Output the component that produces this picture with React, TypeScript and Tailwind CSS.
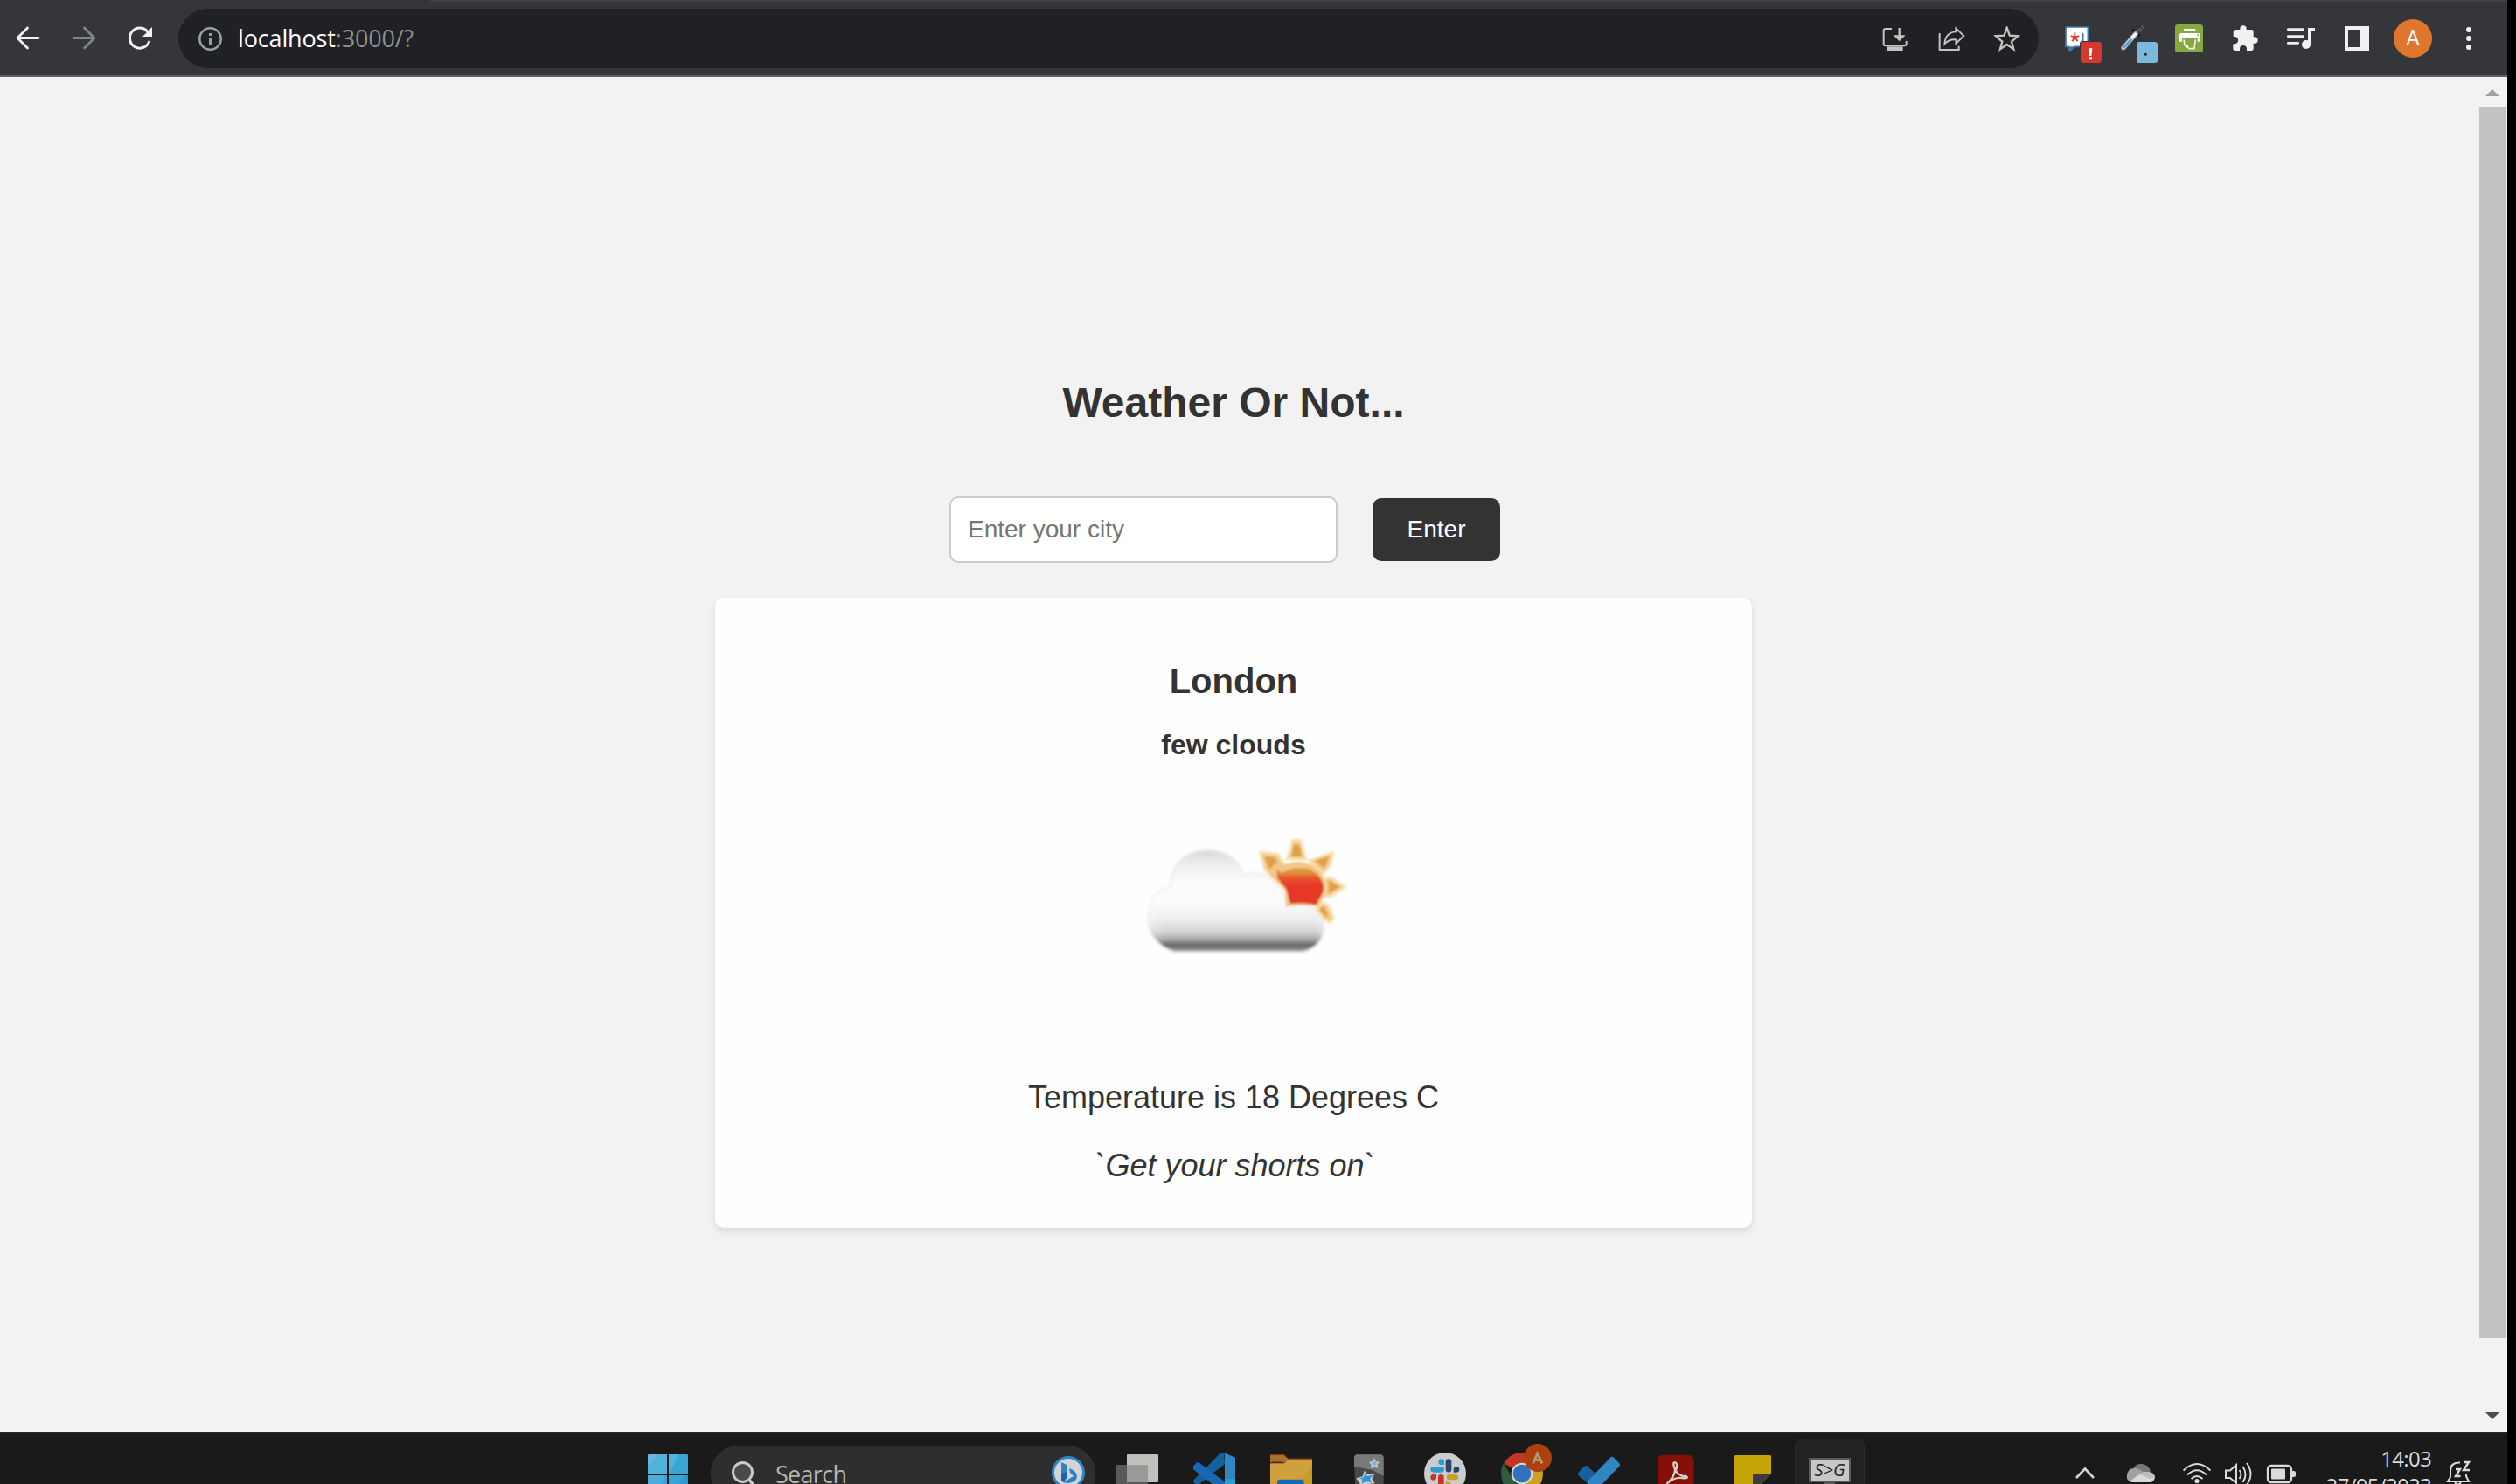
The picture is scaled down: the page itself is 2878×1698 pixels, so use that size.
import React from "react";

function Toolbar() {
  return (
    <header className="flex h-[88px] w-full shrink-0 flex-col border-b-2 border-[#5f6065] bg-[#35363a]">
      <div className="ml-[492px] h-[2px] shrink-0 bg-[#404145]" />
      <div className="flex h-[84px] items-start pt-[8px]">
        <svg className="mt-[18px] ml-[18px] h-8 w-[160px] shrink-0" viewBox="18 28 160 32" fill="none">
          <path d="M44 43.5H20.5M31.5 32L20 43.5L31.5 55" stroke="#f1f1f1" strokeWidth="2.8" strokeLinecap="round" strokeLinejoin="round" />
          <path d="M84 43.5H107.500M96.500 32L108 43.500L96.500 55" stroke="#7e8487" strokeWidth="2.800" strokeLinecap="round" strokeLinejoin="round" />
          <path d="M170.500 48A11.500 11.500 0 1 1 168.500 36" stroke="#f1f1f1" strokeWidth="3" strokeLinecap="round" />
          <path d="M174 31V42H163Z" fill="#f1f1f1" />
        </svg>
        <div className="ml-[26px] flex h-[68px] w-[2128px] shrink-0 items-start rounded-full bg-[#202124]">
          <svg className="mt-5 ml-[22px] h-7 w-7" viewBox="0 0 28 28" fill="none">
            <circle cx="14.500" cy="14.500" r="12.200" stroke="#9aa0a6" strokeWidth="2.600" />
            <path d="M14.500 8V11M14.500 13.200V21" stroke="#9aa0a6" strokeWidth="3" />
          </svg>
          <div className="mt-[15px] ml-[18px] h-10 font-['Open_Sans','Noto_Sans',sans-serif] text-[27px] leading-[38px] tracking-[-0.15px] whitespace-pre text-white">
            localhost<span className="text-[#8f8f8f]">:3000/?</span>
          </div>
          <svg className="mt-5 mr-[21px] ml-auto h-[30px] w-[158px]" viewBox="160 90 474 90" fill="none">
            <path d="M193 99H172Q165 99 165 106V150Q165 157 172 157H236Q243 157 243 150V141" stroke="#c4c4c4" strokeWidth="6" />
            <path d="M178 160H231V174H178Z" fill="#c4c4c4" />
            <path d="M219 96V132" stroke="#c4c4c4" strokeWidth="7" />
            <path d="M198 121H240L219 142Z" fill="#c4c4c4" />
            <path d="M357 114V171H423V158" stroke="#c4c4c4" strokeWidth="6" />
            <path d="M374 151Q377 111 413 109V97L440 123L413 150V136Q390 134 374 151Z" stroke="#c4c4c4" strokeWidth="5.500" />
            <path d="M588 96L597.500 122L626 124L604 143L611 169L588 153L565 169L572 143L550 124L578.500 122Z" stroke="#c4c4c4" strokeWidth="7" />
          </svg>
        </div>
        <svg className="mt-[18px] ml-[28px] h-12 w-[46px] shrink-0" viewBox="780 84 138 144">
          <path d="M791 93H865V160H818L804 173L798 160H789V96Z" fill="#fff" stroke="#3f76a5" strokeWidth="5" />
          <path d="M796 160H814V168L808 174H798Z" fill="#3f76a5" />
          <path d="M848 114V150" stroke="#3f76a5" strokeWidth="5" />
          <path d="M820 112V128M806 123L820 128L835 123M820 128L811 142M820 128L830 142" stroke="#d63b26" strokeWidth="5.500" fill="none" />
          <rect x="837" y="141" width="78" height="78" rx="9" fill="#35363a" />
          <rect x="840" y="144" width="72" height="72" rx="9" fill="#d5382f" />
          <path d="M867 166H880L877 192H870ZM868 196H879V205H868Z" fill="#fff" />
        </svg>
        <svg className="mt-[18px] ml-[18px] h-12 w-[48px] shrink-0" viewBox="972 84 144 144">
          <path d="M1026 119L1056 91" stroke="#555659" strokeWidth="12" strokeDasharray="14 3" />
          <path d="M1020 104L1040 122" stroke="#1f2022" strokeWidth="11" strokeLinecap="round" />
          <path d="M987 164L1029 116" stroke="#b9b9b9" strokeWidth="16" strokeLinecap="round" />
          <path d="M988 162L1028 117" stroke="#f6f8f8" strokeWidth="9" strokeLinecap="round" />
          <path d="M988 162L1012 137" stroke="#4ca4d8" strokeWidth="9" strokeLinecap="round" />
          <rect x="1032" y="144" width="72" height="72" rx="9" fill="#7cb9df" />
          <circle cx="1063" cy="187" r="4.500" fill="#202124" />
        </svg>
        <svg className="mt-[18px] ml-[16px] h-8 w-8 shrink-0" viewBox="24 84 96 96">
          <rect x="24" y="84" width="96" height="96" rx="10" fill="#85a83f" />
          <path d="M54 99H94V108H54ZM45 114H104Q110 114 110 120V143H101V130H48V143H39V120Q39 114 45 114Z" fill="#fff" />
          <path d="M54 136L57 155L73 167H90L94 136" fill="#85a83f" stroke="#efefef" strokeWidth="5" />
          <path d="M56 153H69V166Z" fill="#fff" />
          <circle cx="102" cy="121" r="3" fill="#85a83f" />
        </svg>
        <svg className="mt-[18px] ml-[33px] h-8 w-8 shrink-0" viewBox="219 84 96 96" fill="#f1f1f1">
          <path d="M231 102H247V99A11 11 0 0 1 269 99V102H286Q293 102 293 109V127H297A11 11 0 0 1 297 149H293V167Q293 174 286 174H270V168A12 12 0 0 0 246 168V174H230Q223 174 223 167V151H228A12 12 0 0 0 228 126H224V109Q224 102 231 102Z" />
        </svg>
        <svg className="mt-[18px] ml-[31px] h-8 w-8 shrink-0" viewBox="408 84 96 96" fill="none">
          <path d="M412 101H464M412 125H464M412 148H446" stroke="#f1f1f1" strokeWidth="8.500" strokeLinecap="round" />
          <circle cx="474" cy="153" r="15" fill="#f1f1f1" />
          <path d="M480 153V96H504V105H489V153Z" fill="#f1f1f1" />
        </svg>
        <div className="mt-[20px] ml-[34px] h-7 w-7 shrink-0 border-y-4 border-r-[10px] border-l-4 border-[#f1f1f1]" />
        <div className="mt-[12px] ml-[28px] flex h-11 w-11 shrink-0 items-center justify-center rounded-full bg-[#e0752d] font-['Roboto',sans-serif] text-[23px] text-white">
          A
        </div>
        <div className="mt-[21px] ml-[39px] flex shrink-0 flex-col gap-1">
          <i className="h-1.5 w-1.5 rounded-full bg-[#f1f1f1]" />
          <i className="h-1.5 w-1.5 rounded-full bg-[#f1f1f1]" />
          <i className="h-1.5 w-1.5 rounded-full bg-[#f1f1f1]" />
        </div>
      </div>
    </header>
  );
}

function WeatherIcon() {
  return (
    <svg className="h-[200px] w-[262px]" viewBox="0 0 786 600">
      <defs>
        <linearGradient id="cloud" x1="0" y1="155" x2="0" y2="512" gradientUnits="userSpaceOnUse">
          <stop offset="0" stopColor="#d6d6d6" />
          <stop offset="0.100" stopColor="#e8e8e8" />
          <stop offset="0.300" stopColor="#fafafa" />
          <stop offset="0.480" stopColor="#fcfcfc" />
          <stop offset="0.660" stopColor="#f0f0f0" />
          <stop offset="0.800" stopColor="#d2d2d2" />
          <stop offset="0.870" stopColor="#a4a4a3" />
          <stop offset="0.920" stopColor="#666665" />
          <stop offset="0.960" stopColor="#82827f" />
          <stop offset="1" stopColor="#c4c4c2" />
        </linearGradient>
        <linearGradient id="sun" x1="0" y1="200" x2="0" y2="350" gradientUnits="userSpaceOnUse">
          <stop offset="0" stopColor="#f3c183" />
          <stop offset="0.120" stopColor="#efb872" />
          <stop offset="0.160" stopColor="#dc9a3f" />
          <stop offset="0.260" stopColor="#dc9038" />
          <stop offset="0.340" stopColor="#ea5a30" />
          <stop offset="0.520" stopColor="#e63a28" />
          <stop offset="1" stopColor="#e43626" />
        </linearGradient>
        <filter id="soft" x="-10%" y="-10%" width="120%" height="120%">
          <feGaussianBlur stdDeviation="5" />
        </filter>
        <filter id="ray" x="-10%" y="-10%" width="120%" height="120%">
          <feGaussianBlur stdDeviation="2.500" />
        </filter>
        <linearGradient id="edge" x1="0" y1="0" x2="1" y2="0">
          <stop offset="0" stopColor="#fff" stopOpacity="0.350" />
          <stop offset="0.100" stopColor="#fff" stopOpacity="0" />
          <stop offset="0.950" stopColor="#fff" stopOpacity="0" />
          <stop offset="1" stopColor="#fff" stopOpacity="0.300" />
        </linearGradient>
      </defs>
      <g filter="url(#soft)">
        <path
          d="M190 508Q146 494 120 460Q94 425 100 375Q108 300 176 285Q180 165 302 158Q400 160 428 244Q480 225 520 255Q560 280 578 345Q640 330 690 375Q715 420 694 465Q669 500 629 508Z"
          fill="url(#cloud)"
          stroke="#ececec"
          strokeWidth="5"
        />
        <path
          d="M190 508Q146 494 120 460Q94 425 100 375Q108 300 176 285Q180 165 302 158Q400 160 428 244Q480 225 520 255Q560 280 578 345Q640 330 690 375Q715 420 694 465Q669 500 629 508Z"
          fill="url(#edge)"
        />
      </g>
      <g filter="url(#ray)">
        <g fill="#f3c588" stroke="#f8e2b4" strokeWidth="9" strokeLinejoin="round">
          <path d="M594 124H624L632 160L642 190H576L588 160Z" />
          <path d="M484 166L545 172L572 215L540 262L500 225Z" />
          <path d="M735 166L724 212L702 238L652 195Z" />
          <path d="M776 285L725 317H706V256L728 253Z" />
          <path d="M700 338L716 345L736 392L724 406L706 398L676 360Z" />
        </g>
        <path d="M520 235Q570 196 625 199Q708 212 708 290Q706 325 684 352Q630 342 574 352Q570 318 570 296L520 245Z" fill="#f3c588" />
        <path d="M541 226L560 236Q600 214 640 219Q690 235 701 278V300L677 346Q630 336 588 342L574 292L543 254Z" fill="url(#sun)" />
        <g fill="#e0a044">
          <path d="M598 142H620L628 180H592Z" />
          <path d="M499 180L534 182L542 200L516 224Z" />
          <path d="M720 181L704 220L672 192Z" />
          <path d="M758 284L720 306V262Z" />
          <path d="M700 350L715 374L711 391L688 364Z" />
        </g>
      </g>
    </svg>
  );
}

function Page() {
  return (
    <main className="flex min-h-0 flex-1 bg-[#f2f2f2]">
      <div className="flex w-[2822px] flex-col items-center font-['Liberation_Sans',Arial,sans-serif] text-[#333]">
        <h1 className="mt-[345px] h-[55px] text-[48px] leading-[56px] font-bold">Weather Or Not...</h1>
        <form className="mt-20 mr-5 flex h-[76px] items-center gap-10" onSubmit={(e) => e.preventDefault()}>
          <input
            className="h-[76px] w-[444px] rounded-[10px] border-2 border-[#ccc] bg-white px-[19px] text-[28px] placeholder:text-[#757575]"
            placeholder="Enter your city"
          />
          <button className="h-[72px] w-[146px] rounded-[10px] bg-[#333] text-[28px] text-white">Enter</button>
        </form>
        <section className="mt-10 flex h-[721px] w-[1186px] flex-col items-center rounded-[10px] bg-[#fefefe] shadow-[0_4px_8px_rgba(0,0,0,0.1)]">
          <h2 className="mt-[72px] text-[40px] leading-[46px] font-bold">London</h2>
          <h3 className="mt-[32px] text-[32px] leading-[36px] font-bold">few clouds</h3>
          <div className="mt-[50px] flex">
            <WeatherIcon />
          </div>
          <p className="mt-[116px] text-[36px] leading-[40px]">Temperature is 18 Degrees C</p>
          <p className="mt-[38px] ml-[3px] text-[36px] leading-[40px] italic">`Get your shorts on`</p>
        </section>
      </div>
      <div className="ml-[14px] flex w-[30px] flex-col items-center">
        <svg className="mt-[14px] h-2 w-4 shrink-0" viewBox="0 0 16 8">
          <path d="M0 8L8 0L16 8Z" fill="#a0a19c" />
        </svg>
        <div className="mt-3 h-[1409px] w-[30px] shrink-0 bg-[#c1c2c2]" />
        <svg className="mt-[85px] h-2 w-4 shrink-0" viewBox="0 0 16 8">
          <path d="M0 0L8 8L16 0Z" fill="#4b4c50" />
        </svg>
      </div>
    </main>
  );
}

function Taskbar() {
  return (
    <footer className="flex h-[60px] shrink-0 items-start overflow-hidden border-t-2 border-[#2a2a2a] bg-[#1a1a1a] font-['Open_Sans','Noto_Sans',sans-serif]">
      <svg className="mt-6 ml-[741px] h-[34px] w-[46px] shrink-0" viewBox="0 0 46 34">
        <path d="M1 0H22V22H0V1Z" fill="#4fb3da" />
        <path d="M1 0H12L0 13V1Z" fill="#6bb4e0" />
        <path d="M24 0H45L46 1V22H24Z" fill="#38a5d6" />
        <path d="M24 0H35L30 12L24 22Z" fill="#4fb3da" />
        <path d="M0 24H22V34H0Z" fill="#38a5d6" />
        <path d="M0 24H20L14 34H0Z" fill="#49afd9" />
        <path d="M24 24H46V34H24Z" fill="#2b98cb" />
        <path d="M24 24H42L36 34H24Z" fill="#38a5d6" />
      </svg>
      <div className="mt-[14px] ml-[26px] flex h-[64px] w-[440px] shrink-0 items-start rounded-full border border-[#353535] bg-[#2e2e2e]">
        <svg className="mt-4 ml-[23px] h-[30px] w-[30px] shrink-0" viewBox="0 0 30 30" fill="none">
          <circle cx="12.500" cy="13.500" r="11" fill="#494a4e" stroke="#c9c9c9" strokeWidth="3" />
          <path d="M20 22L27 31" stroke="#c9c9c9" strokeWidth="3.500" />
        </svg>
        <span className="mt-[13px] ml-5 text-[27px] leading-[38px] tracking-[-0.7px] text-[#b4b4b0]">Search</span>
        <svg className="mt-[11px] mr-[11px] ml-auto h-[38px] w-[38px] shrink-0" viewBox="0 0 38 38">
          <circle cx="19" cy="19" r="17.500" fill="#d2d4d6" stroke="#2d85cb" strokeWidth="3" />
          <path d="M11 7L17 10V25L13 30Q11 28 11 26Z" fill="#2a86c8" />
          <path d="M20 14Q29 17 29 24Q28 30 18 31L13 30L25 23L21 19Z" fill="#2b7fca" />
          <path d="M11 20L17 18V25L14 30L11 28Z" fill="#2460ad" />
        </svg>
      </div>
      <svg className="mt-6 ml-[24px] h-[34px] w-12 shrink-0" viewBox="0 0 48 34">
        <rect x="12" width="36" height="32" rx="1" fill="#bfc1bc" />
        <path d="M0 13Q0 12 1 12H12V32H36V34H0Z" fill="#58595b" />
        <path d="M12 12H35L36 13V32H12Z" fill="#989a96" />
      </svg>
      <svg className="mt-[22px] ml-10 h-9 w-12 shrink-0" viewBox="375 126 144 108">
        <path d="M375 222L466 130L480 126L483 165L396 234H382L375 227Z" fill="#17609e" />
        <path d="M375 172L387 160H394L483 226V234H440L375 184Z" fill="#1769b3" />
        <path d="M480 126L519 143V234H483V136Z" fill="#2f86c3" />
        <path d="M483 216H519V234H483Z" fill="#2a9dd2" />
      </svg>
      <svg className="mt-[22px] ml-10 h-9 w-12 shrink-0" viewBox="639 126 144 108">
        <path d="M639 134H687L702 148H783V160H639Z" fill="#a9722c" />
        <path d="M639 134H687L699 147H783" stroke="#9a3b16" strokeWidth="3" fill="none" />
        <path d="M639 163H686L703 150H783V234H639Z" fill="#cfa03c" />
        <path d="M783 170V234H732Z" fill="#c59b22" />
        <path d="M647 157H678" stroke="#9a3b16" strokeWidth="3" />
        <path d="M663 234V228Q663 218 673 218H745Q755 218 755 228V234Z" fill="#1767b3" />
      </svg>
      <svg className="mt-[22px] ml-[47px] h-9 w-9 shrink-0" viewBox="924 126 108 108">
        <path d="M927 145Q927 133 939 133H1016Q1028 133 1028 145V234H930Z" fill="#48494b" />
        <path d="M927 145Q927 133 939 133H1016Q1028 133 1028 145V206L990 186L927 174Z" fill="#78797b" />
        <path d="M996 145L1002 157L1014 158L1006 167L1009 180L996 174L984 181L986 168L978 158L990 156Z" fill="#c6ccd0" />
        <circle cx="996" cy="163" r="8" fill="#7fb5d8" />
        <path d="M962 188L972 201L998 197L988 216L998 232L972 234H948L934 214L956 208Z" fill="#c8ccce" />
        <path d="M964 196L972 207L991 203L981 217L988 228L968 226L953 232L956 218L945 214L960 210Z" fill="#3194d2" />
      </svg>
      <svg className="mt-[22px] ml-[45px] h-9 w-12 shrink-0" viewBox="1167 126 144 108">
        <circle cx="1239" cy="198" r="72" fill="#cbcccd" />
        <path d="M1226 148A10 10 0 0 1 1236 158V168H1226A10 10 0 0 1 1226 148ZM1199 174H1226A10 10 0 0 1 1226 194H1199A10 10 0 0 1 1199 174Z" fill="#2c9bd0" />
        <path d="M1251 148A10 10 0 0 1 1261 158V184A10 10 0 0 1 1241 184V158A10 10 0 0 1 1251 148ZM1268 194V184A10 10 0 1 1 1278 194Z" fill="#2b4467" />
        <path d="M1209 201V211A10 10 0 1 1 1199 201ZM1225 201A10 10 0 0 1 1235 211V234H1215V211A10 10 0 0 1 1225 201Z" fill="#c03725" />
        <path d="M1251 201H1278A10 10 0 0 1 1278 220H1251A10 10 0 0 1 1251 201ZM1241 226H1251L1261 234H1241Z" fill="#cfa01f" />
      </svg>
      <svg className="mt-[10px] ml-[39px] h-12 w-[60px] shrink-0" viewBox="108 90 180 144">
        <path d="M183 198L120 163Q142 126 183 126Q230 128 248 166Z" fill="#c03725" />
        <path d="M120 163Q111 178 111 198Q112 220 120 234H165L150 212Z" fill="#2f5c3b" />
        <path d="M183 162H246Q255 178 255 198Q254 220 246 234H195Z" fill="#cfa01f" />
        <circle cx="183" cy="198" r="34" fill="#2d72bb" stroke="#d7d7d7" strokeWidth="6" />
        <circle cx="237" cy="144" r="48" fill="#ad400f" />
        <path d="M221 163L236 129L252 163M227 151H247" stroke="#aaa07a" strokeWidth="8" fill="none" />
      </svg>
      <svg className="mt-[22px] ml-[29px] h-9 w-12 shrink-0" viewBox="375 126 144 108">
        <path d="M378 193L397 173Q403 169 409 174L432 195L412 234L376 204Q373 198 378 193Z" fill="#17609e" />
        <path d="M405 228L486 143Q492 138 498 143L517 163Q521 168 517 173L458 234H411Z" fill="#2f86c3" />
      </svg>
      <svg className="mt-6 ml-[42px] h-[34px] w-[43px] shrink-0" viewBox="646 132 128 102">
        <rect x="648" y="134" width="125" height="125" rx="20" fill="#870f05" />
        <path d="M682 232Q706 210 709 186Q698 158 709 160Q720 163 711 188Q724 209 746 207Q756 214 740 214Q705 208 682 232Z" fill="none" stroke="#d5d0cc" strokeWidth="7" strokeLinejoin="round" />
      </svg>
      <svg className="mt-[25px] ml-[46px] h-[33px] w-[42px] shrink-0" viewBox="912 135 126 99">
        <path d="M915 135H1035L1038 138V198L1003 234H912V138Z" fill="#c6a405" />
        <path d="M975 198H1038L1003 234H975Z" fill="#3c3c40" />
      </svg>
      <div className="mt-[6px] ml-[27px] h-[60px] w-[80px] shrink-0 rounded-[10px] border border-[#2d2d2d] bg-[#222]">
        <div className="mt-[21px] ml-[15px] flex h-7 w-12 items-center justify-center border-2 border-[#59595b] bg-[#c6c7c7] font-['Open_Sans',sans-serif] text-[20px] leading-none text-[#222] italic">
          S&gt;G
        </div>
        <div className="mx-auto h-3 w-3 bg-[#59595b]" />
      </div>
      <svg className="mt-[30px] ml-[241px] h-7 w-[256px] shrink-0" viewBox="0 0 256 28" fill="none">
        <path d="M1 21L11 10.500L21 21" stroke="#d5d5d5" strokeWidth="2.600" />
        <path d="M65 14Q67 5 75 5Q83 5 86 13L76 20Z" fill="#77787b" />
        <path d="M59 18Q60 10 67 10Q73 9 80 17L62 25Q58 23 59 18Z" fill="#a0a09f" />
        <path d="M62 25Q72 17 79 14Q90 13 91 20Q90 26 85 26H66Q63 26 62 25Z" fill="#d8d9d8" />
        <path d="M79 14Q90 13 91 20L86 22L74 17Z" fill="#bcbcbb" />
        <g stroke="#dadada" strokeWidth="2">
          <path d="M123.500 12.500Q139 -2.500 154.500 12.500M128 17.500Q139 7 150 17.500M132.500 22Q139 16 145.500 22" />
          <path d="M172 12.500H177L184 6V27L177 21H172ZM187.500 12Q191.500 17 187.500 22M191.500 8Q197.500 17 191.500 26M196 4Q205 17 196 29" />
          <rect x="220" y="7" width="27" height="19" rx="4" strokeWidth="2.300" />
        </g>
        <circle cx="139" cy="24.500" r="2.600" fill="#dadada" />
        <rect x="224" y="10.500" width="16" height="12" rx="1" fill="#dadada" />
        <path d="M248 13H250Q252 13 252 15V18Q252 20 250 20H248Z" fill="#dadada" />
      </svg>
      <div className="mt-[13px] ml-auto shrink-0 text-right text-[24px] leading-[31px] tracking-[-0.7px] text-[#d9d9d9]">
        <div>14:03</div>
        <div>27/05/2023</div>
      </div>
      <svg className="mt-[30px] mr-[41px] ml-[17px] h-7 w-[29px] shrink-0" viewBox="0 0 29 28" fill="none" stroke="#dadada" strokeWidth="2">
        <path d="M16 3.500Q5 3 5 13V20L2 25H26L23 19V16M10 26Q13.500 31 17 26" />
        <path d="M11 11H16L11 19H16.500M20 3H26L20 12H27" strokeWidth="2.400" />
      </svg>
    </footer>
  );
}

export default function App() {
  return (
    <div className="flex h-[1698px] w-[2878px] overflow-hidden bg-black">
      <div className="flex w-[2868px] flex-col">
        <Toolbar />
        <Page />
        <Taskbar />
      </div>
    </div>
  );
}
